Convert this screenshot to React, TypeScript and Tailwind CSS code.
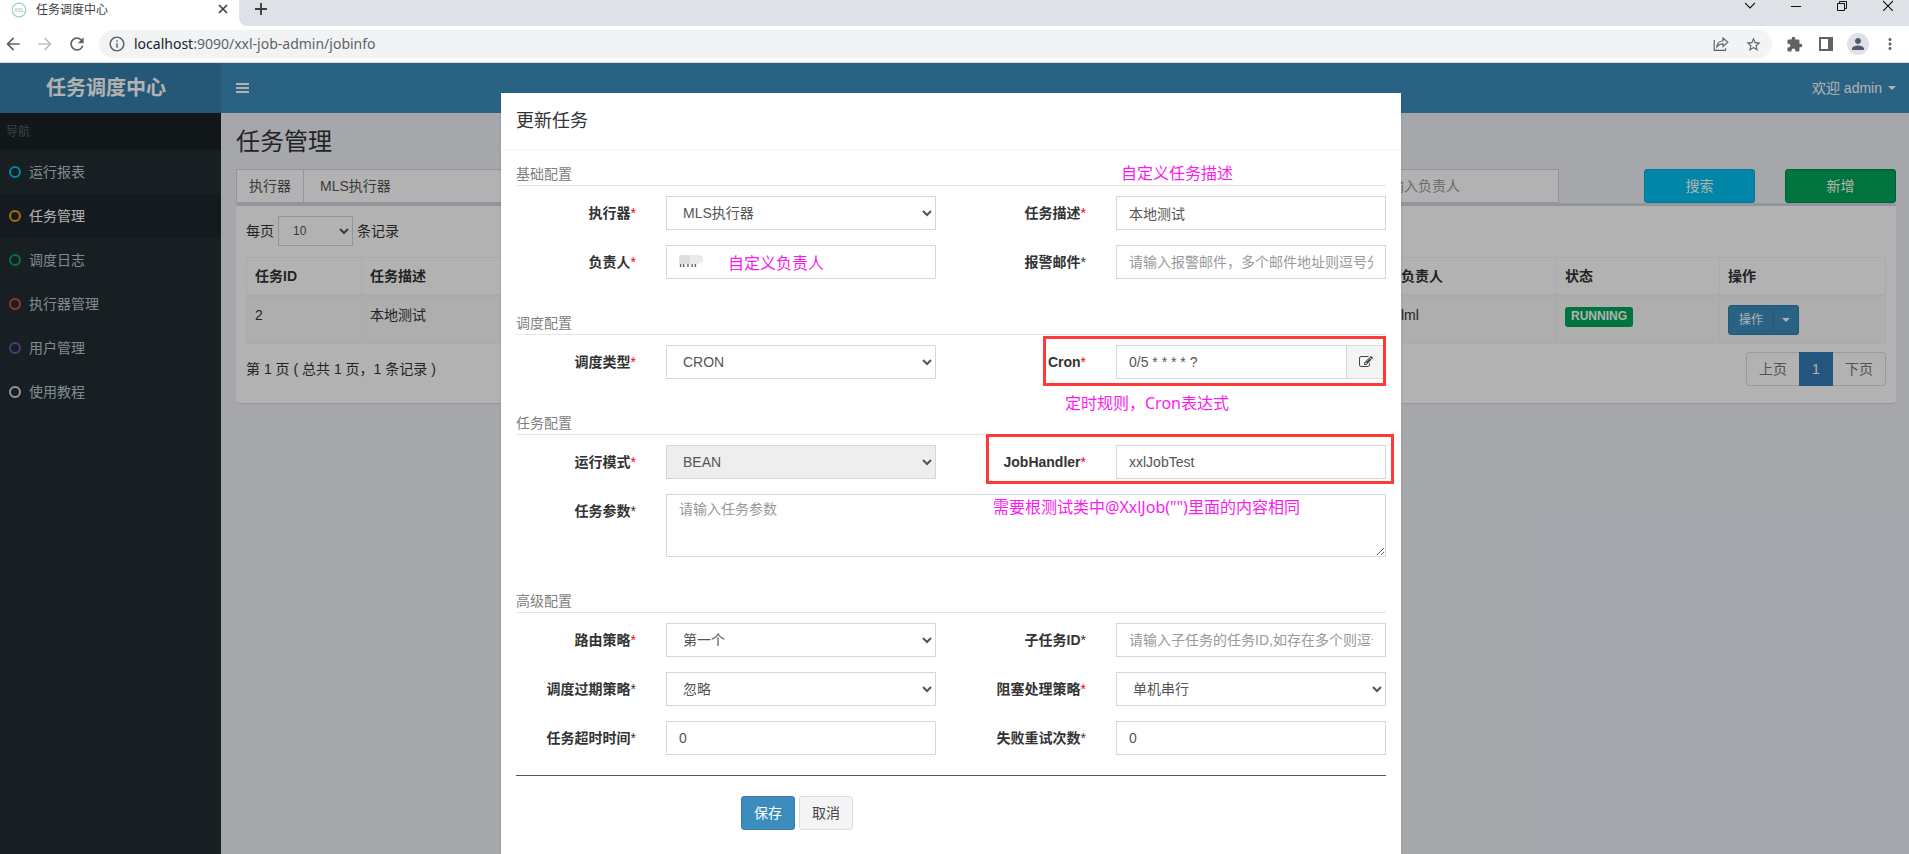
import React from "react";
import {
  MdArrowBack,
  MdArrowForward,
  MdExtension,
  MdInfoOutline,
  MdMoreVert,
  MdPerson,
  MdRefresh,
  MdStarBorder,
} from "react-icons/md";

function BrowserChrome() {
  return (
    <div className="shrink-0 border-b border-[#dadce0] bg-white font-['Noto_Sans','Noto_Sans_CJK_SC',sans-serif]">
      <div className="flex h-[26px] bg-white">
        <div className="flex w-[239px] items-start justify-between pl-3 pr-[11px]">
          <div className="flex items-center gap-2">
            <svg className="h-4 w-4" viewBox="0 0 16 16" aria-hidden="true">
              <circle cx="7" cy="8" r="6.8" fill="none" stroke="#93d5b8" strokeWidth="1.2" />
              <text x="7" y="10" textAnchor="middle" fontSize="5.5" fill="#6cc59c">
                XXL
              </text>
            </svg>
            <span className="text-xs leading-5 text-[#3c4043]">任务调度中心</span>
          </div>
          <button type="button" aria-label="关闭标签页" className="mt-1">
            <svg className="h-[10px] w-[10px]" viewBox="0 0 10 10" stroke="#3c4043" strokeWidth="1.7">
              <path d="M1 1l8 8M9 1l-8 8" />
            </svg>
          </button>
        </div>
        <div className="flex flex-1 items-start justify-between rounded-bl-lg bg-[#dee1e6] pl-4 pr-4">
          <button type="button" aria-label="新标签页" className="mt-[3px]">
            <svg className="h-3 w-3" viewBox="0 0 12 12" stroke="#3c4043" strokeWidth="1.9">
              <path d="M6 0v12M0 6h12" />
            </svg>
          </button>
          <div className="flex items-start gap-9">
            <button type="button" aria-label="搜索标签页">
              <svg className="h-[11px] w-[10px]" viewBox="0 0 10 11" fill="none" stroke="#111" strokeWidth="1.1">
                <path d="M0 3l5 5 5-5" />
              </svg>
            </button>
            <button type="button" aria-label="最小化">
              <svg className="h-[11px] w-[10px]" viewBox="0 0 10 11" stroke="#111">
                <path d="M0 6.5h10" />
              </svg>
            </button>
            <button type="button" aria-label="还原">
              <svg className="h-[11px] w-[10px]" viewBox="0 0 10 11" fill="none" stroke="#111">
                <path d="M.5 3.500h7v7h-7zM2.500 3.500v-2h7v7h-2" />
              </svg>
            </button>
            <button type="button" aria-label="关闭">
              <svg className="h-[11px] w-[10px]" viewBox="0 0 10 11" stroke="#111" strokeWidth="1.1">
                <path d="M0 1l10 10M10 1L0 11" />
              </svg>
            </button>
          </div>
        </div>
      </div>
      <div className="flex h-9 items-center pl-[3px] pr-[10px] text-[#5f6368]">
        <button type="button" aria-label="后退" className="mr-3">
          <MdArrowBack size={20} />
        </button>
        <button type="button" aria-label="前进" className="mr-3 text-[#bdc1c6]">
          <MdArrowForward size={20} />
        </button>
        <button type="button" aria-label="刷新" className="mr-3">
          <MdRefresh size={20} />
        </button>
        <div className="flex h-7 flex-1 items-center rounded-full bg-[#f1f3f4] pl-[9px] pr-[10px]">
          <MdInfoOutline size={18} />
          <span className="ml-2 flex-1 text-sm text-[#5f6368]">
            <span className="text-[#202124]">localhost</span>:9090/xxl-job-admin/jobinfo
          </span>
          <button type="button" aria-label="分享" className="mr-4">
            <svg className="h-4 w-4" viewBox="0 0 16 16" fill="none" stroke="#5f6368" strokeWidth="1.2">
              <path d="M1.200 4v10.300h11.300v-2M3.800 11c.2-4 2.700-6 6.200-6V2l4.800 4.300L10 10.500V7.800C7.200 7.800 5.300 8.800 3.800 11z" />
            </svg>
          </button>
          <button type="button" aria-label="收藏">
            <MdStarBorder size={17} />
          </button>
        </div>
        <button type="button" aria-label="扩展程序" className="ml-[14px]">
          <MdExtension size={17} />
        </button>
        <button type="button" aria-label="侧边栏" className="ml-4">
          <svg className="h-[14px] w-[14px]" viewBox="0 0 14 14">
            <path d="M0 0h14v14H0zM2 2v10h7V2z" fill="#5f6368" fillRule="evenodd" />
          </svg>
        </button>
        <span className="ml-[14px] flex h-[22px] w-[22px] items-center justify-center rounded-full bg-[#dee1e6] text-[#525a70]">
          <MdPerson size={18} />
        </span>
        <button type="button" aria-label="菜单" className="ml-3">
          <MdMoreVert size={18} />
        </button>
      </div>
    </div>
  );
}

const NAV = [
  { label: "运行报表", color: "#00c0ef", active: false },
  { label: "任务管理", color: "#f39c12", active: true },
  { label: "调度日志", color: "#00a65a", active: false },
  { label: "执行器管理", color: "#dd4b39", active: false },
  { label: "用户管理", color: "#605ca8", active: false },
  { label: "使用教程", color: "#d2d6de", active: false },
];

function Sidebar() {
  return (
    <aside className="w-[221px] shrink-0 bg-[#222d32]">
      <div className="flex h-[37px] items-center bg-[#1a2226] pl-[6px] text-xs text-[#4b646f]">导航</div>
      <nav>
        {NAV.map((item) => (
          <a
            key={item.label}
            href="#"
            className={
              item.active
                ? "flex h-11 items-center gap-2 bg-[#1e282c] pl-[9px] text-white"
                : "flex h-11 items-center gap-2 pl-[9px] text-[#b8c7ce]"
            }
          >
            <svg className="h-3 w-3" viewBox="0 0 12 12" aria-hidden="true">
              <circle cx="6" cy="6" r="5" fill="none" stroke={item.color} strokeWidth="2" />
            </svg>
            {item.label}
          </a>
        ))}
      </nav>
    </aside>
  );
}

function Caret() {
  return (
    <svg className="h-1 w-2" viewBox="0 0 8 4" aria-hidden="true">
      <path d="M0 0h8L4 4z" fill="currentColor" />
    </svg>
  );
}

function JobPage() {
  return (
    <main className="min-w-0 flex-1 bg-[#ecf0f5] pl-[15px] pr-[13px]">
      <h1 className="flex h-14 items-center pt-[2px] text-2xl">任务管理</h1>
      <div className="flex h-[34px]">
        <div className="flex w-[392px] border border-[#d2d6de] bg-white text-[#555]">
          <label htmlFor="group" className="flex items-center border-r border-[#d2d6de] px-3">
            执行器
          </label>
          <select id="group" className="flex-1 px-3">
            <option>MLS执行器</option>
          </select>
        </div>
        <input
          aria-label="负责人"
          placeholder="请输入负责人"
          className="ml-auto mr-[85px] w-[196px] border border-[#d2d6de] bg-white px-3 placeholder:text-[#999]"
        />
        <button type="button" className="mr-[30px] w-[111px] rounded-[3px] border border-[#00acd6] bg-[#00c0ef] text-white">
          搜索
        </button>
        <button type="button" className="w-[111px] rounded-[3px] border border-[#008d4c] bg-[#00a65a] text-white">
          新增
        </button>
      </div>
      <section className="rounded-[3px] border-t-[3px] border-[#d2d6de] bg-white px-[10px] pb-[17px] pt-[10px] shadow-[0_1px_1px_rgba(0,0,0,0.1)]">
        <div className="flex h-[30px] items-center gap-1">
          <label htmlFor="length">每页</label>
          <select id="length" className="h-[30px] w-[75px] border border-[#d2d6de] bg-white px-[10px] text-xs text-[#555]">
            <option>10</option>
          </select>
          <span>条记录</span>
        </div>
        <table className="mt-[11px] w-full table-fixed border-separate border-spacing-0 border-l border-t border-[#f4f4f4] text-left">
          <colgroup>
            <col className="w-[115px]" />
            <col />
            <col className="w-[164px]" />
            <col className="w-[163px]" />
            <col className="w-[166px]" />
          </colgroup>
          <thead>
            <tr>
              {["任务ID", "任务描述", "负责人", "状态", "操作"].map((h) => (
                <th key={h} className="border-b-2 border-r border-[#f4f4f4] p-2 font-bold leading-5">
                  {h}
                </th>
              ))}
            </tr>
          </thead>
          <tbody className="bg-[#f9f9f9]">
            <tr>
              <td className="border-y border-r border-[#f4f4f4] p-2 align-top">2</td>
              <td className="border-y border-r border-[#f4f4f4] p-2 align-top">本地测试</td>
              <td className="border-y border-r border-[#f4f4f4] p-2 align-top">lml</td>
              <td className="border-y border-r border-[#f4f4f4] p-2 align-top">
                <span className="mt-[2px] flex h-5 w-[68px] items-center justify-center rounded-[3px] bg-[#00a65a] pb-[2px] text-xs font-bold text-white">
                  RUNNING
                </span>
              </td>
              <td className="border-y border-r border-[#f4f4f4] p-2 align-top">
                <div className="flex h-[30px] text-xs text-white">
                  <button type="button" className="w-[46px] rounded-l-[3px] border border-[#367fa9] bg-[#3c8dbc]">
                    操作
                  </button>
                  <button
                    type="button"
                    aria-label="更多操作"
                    className="flex w-[25px] items-center justify-center rounded-r-[3px] border border-l-0 border-[#367fa9] bg-[#3c8dbc]"
                  >
                    <Caret />
                  </button>
                </div>
              </td>
            </tr>
          </tbody>
        </table>
        <div className="mt-2 flex h-[34px] items-center justify-between">
          <span>第 1 页 ( 总共 1 页，1 条记录 )</span>
          <div className="flex h-[34px] text-[#777]">
            <button type="button" className="rounded-l border border-r-0 border-[#ddd] px-3">
              上页
            </button>
            <button type="button" className="w-[34px] bg-[#337ab7] text-white">
              1
            </button>
            <button type="button" className="rounded-r border border-l-0 border-[#ddd] px-3">
              下页
            </button>
          </div>
        </div>
      </section>
    </main>
  );
}

function SectionTitle({ children }: { children: React.ReactNode }) {
  return <h2 className="mb-[10px] h-[21px] border-b border-[#e5e5e5] leading-[18px] text-[#808080]">{children}</h2>;
}

function FormRow({ children }: { children: React.ReactNode }) {
  return (
    <div className="-mx-[15px] mb-[15px] grid grid-cols-[2fr_4fr_2fr_4fr] last:mb-0">{children}</div>
  );
}

function FieldLabel({ htmlFor, text, required }: { htmlFor: string; text: string; required?: boolean }) {
  return (
    <label htmlFor={htmlFor} className="flex h-[34px] items-center justify-end pr-[15px] font-bold">
      {text}
      <span className={required ? "font-normal text-[#ff0000]" : "font-normal"}>*</span>
    </label>
  );
}

function TextField(props: {
  id: string;
  label: string;
  required?: boolean;
  value?: string;
  placeholder?: string;
}) {
  return (
    <>
      <FieldLabel htmlFor={props.id} text={props.label} required={props.required} />
      <div className="min-w-0 px-[15px]">
        <input
          id={props.id}
          defaultValue={props.value}
          placeholder={props.placeholder}
          className="h-[34px] w-full border border-[#d2d6de] bg-white px-3 text-[#555] placeholder:text-[#999]"
        />
      </div>
    </>
  );
}

function SelectField(props: {
  id: string;
  label: string;
  required?: boolean;
  value: string;
  disabled?: boolean;
}) {
  return (
    <>
      <FieldLabel htmlFor={props.id} text={props.label} required={props.required} />
      <div className="min-w-0 px-[15px]">
        <select
          id={props.id}
          disabled={props.disabled}
          className="h-[34px] w-full border border-[#d2d6de] bg-white px-3 text-[#555] disabled:bg-[#eee] disabled:opacity-100"
        >
          <option>{props.value}</option>
        </select>
      </div>
    </>
  );
}

function UpdateDialog() {
  return (
    <div
      role="dialog"
      aria-label="更新任务"
      className="relative mt-[30px] w-full max-w-[900px] bg-white shadow-[0_2px_3px_rgba(0,0,0,0.125)]"
    >
      <div className="flex h-[57px] items-center border-b border-[#f4f4f4] px-[15px] text-lg">更新任务</div>
      <form className="p-[15px]">
        <SectionTitle>基础配置</SectionTitle>
        <div className="mb-[35px]">
          <FormRow>
            <SelectField id="jobGroup" label="执行器" required value="MLS执行器" />
            <TextField id="jobDesc" label="任务描述" required value="本地测试" />
          </FormRow>
          <FormRow>
            <TextField id="author" label="负责人" required value="lml" />
            <TextField id="alarmEmail" label="报警邮件" placeholder="请输入报警邮件，多个邮件地址则逗号分隔" />
          </FormRow>
        </div>
        <SectionTitle>调度配置</SectionTitle>
        <div className="mb-[35px]">
          <FormRow>
            <SelectField id="scheduleType" label="调度类型" required value="CRON" />
            <FieldLabel htmlFor="cron" text="Cron" required />
            <div className="flex h-[34px] min-w-0 px-[15px]">
              <input
                id="cron"
                defaultValue="0/5 * * * * ?"
                className="min-w-0 flex-1 border border-[#d2d6de] bg-white px-3 text-[#555]"
              />
              <button
                type="button"
                aria-label="编辑 Cron"
                className="flex w-[39px] items-center justify-center border border-l-0 border-[#ddd] bg-[#f4f4f4] text-[#444]"
              >
                <svg className="h-[14px] w-[14px]" viewBox="0 0 1792 1792" fill="currentColor">
                  <path d="M888 1184l116-116-152-152-116 116v56h96v96h56zm440-720q-16-16-33 1l-350 350q-17 17-1 33t33-1l350-350q17-17 1-33zm80 594v190q0 119-84.5 203.5t-203.5 84.5h-832q-119 0-203.5-84.5t-84.5-203.5v-832q0-119 84.5-203.5t203.5-84.5h832q63 0 117 25 15 7 18 23 3 17-9 29l-49 49q-14 14-32 8-23-6-45-6h-832q-66 0-113 47t-47 113v832q0 66 47 113t113 47h832q66 0 113-47t47-113v-126q0-13 9-22l64-64q15-15 35-7t20 29zm-96-738l288 288-672 672h-288v-288zm444 132l-92 92-288-288 92-92q28-28 68-28t68 28l152 152q28 28 28 68t-28 68z" />
                </svg>
              </button>
            </div>
          </FormRow>
        </div>
        <SectionTitle>任务配置</SectionTitle>
        <div className="mb-[35px]">
          <FormRow>
            <SelectField id="glueType" label="运行模式" required value="BEAN" disabled />
            <TextField id="handler" label="JobHandler" required value="xxlJobTest" />
          </FormRow>
          <FormRow>
            <FieldLabel htmlFor="param" text="任务参数" />
            <div className="col-span-3 px-[15px]">
              <textarea
                id="param"
                placeholder="请输入任务参数"
                className="block h-[63px] w-full border border-[#d2d6de] bg-white px-3 py-1 leading-5 text-[#555] placeholder:text-[#999]"
              />
            </div>
          </FormRow>
        </div>
        <SectionTitle>高级配置</SectionTitle>
        <div>
          <FormRow>
            <SelectField id="route" label="路由策略" required value="第一个" />
            <TextField id="child" label="子任务ID" placeholder="请输入子任务的任务ID,如存在多个则逗号分隔" />
          </FormRow>
          <FormRow>
            <SelectField id="misfire" label="调度过期策略" value="忽略" />
            <SelectField id="block" label="阻塞处理策略" required value="单机串行" />
          </FormRow>
          <FormRow>
            <TextField id="timeout" label="任务超时时间" value="0" />
            <TextField id="retry" label="失败重试次数" value="0" />
          </FormRow>
        </div>
        <hr className="mb-5 mt-5 border-[#555]" />
        <div className="flex h-[34px] gap-1 pl-[225px]">
          <button type="button" className="w-[54px] rounded-[3px] border border-[#367fa9] bg-[#3c8dbc] text-white">
            保存
          </button>
          <button type="button" className="w-[54px] rounded-[3px] border border-[#ddd] bg-[#f4f4f4] text-[#444]">
            取消
          </button>
        </div>
      </form>

      {/* Notes and markers laid over the form */}
      <div className="pointer-events-none absolute inset-0 font-['Noto_Sans','Noto_Sans_CJK_SC',sans-serif] text-base leading-6 text-[#fa1af0]">
        <svg className="absolute left-[178px] top-[162px] h-[9px] w-6" viewBox="0 0 24 9" aria-hidden="true">
          <path d="M2 0h9v9H1L0 7V2z" fill="#dedede" />
          <path d="M11 0h11l2 2v4l-2 2-4 1h-7z" fill="#ebebeb" />
        </svg>
        <span className="absolute left-[620px] top-[68px]">自定义任务描述</span>
        <span className="absolute left-[227px] top-[158px]">自定义负责人</span>
        <span className="absolute left-[564px] top-[298px]">定时规则，Cron表达式</span>
        <span className="absolute left-[492px] top-[402px] whitespace-nowrap">
          需要根测试类中@XxlJob("")里面的内容相同
        </span>
        <div className="absolute left-[542px] top-[243px] h-[50px] w-[343px] border-[3px] border-[#ff3838]" />
        <div className="absolute left-[485px] top-[341px] h-[50px] w-[408px] border-[3px] border-[#ff3838]" />
      </div>
    </div>
  );
}

export default function App() {
  return (
    <div className="flex h-screen flex-col overflow-hidden">
      <BrowserChrome />
      <div className="relative flex min-h-0 flex-1 flex-col font-['Liberation_Sans','Noto_Sans_CJK_SC',sans-serif] text-sm text-[#333]">
        <header className="flex h-[50px] shrink-0 bg-[#3c8dbc] text-white">
          <div className="flex w-[221px] items-center justify-center bg-[#367fa9] pr-[9px] text-xl font-bold">
            任务调度中心
          </div>
          <div className="flex flex-1 items-center justify-between pl-[15px] pr-[13px]">
            <button type="button" aria-label="切换导航">
              <svg className="h-[10px] w-[13px]" viewBox="0 0 13 10" fill="currentColor">
                <path d="M0 0h13v2H0zM0 4h13v2H0zM0 8h13v2H0z" />
              </svg>
            </button>
            <button type="button" className="flex items-center gap-[6px]">
              欢迎 admin
              <Caret />
            </button>
          </div>
        </header>
        <div className="flex min-h-0 flex-1">
          <Sidebar />
          <JobPage />
        </div>
        <div className="absolute inset-0 flex justify-center overflow-hidden bg-black/30 pr-[7px]">
          <UpdateDialog />
        </div>
      </div>
    </div>
  );
}
